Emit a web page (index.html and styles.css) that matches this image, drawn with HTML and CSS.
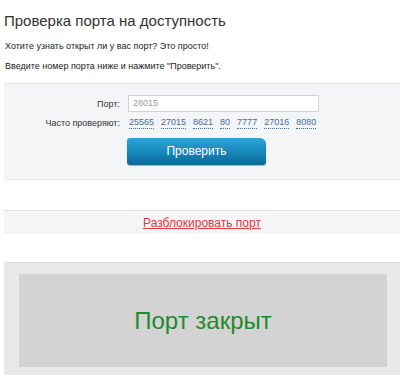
FILE: index.html
```html
<!DOCTYPE html>
<html lang="ru">
<head>
<meta charset="utf-8">
<title>Проверка порта на доступность</title>
<link rel="stylesheet" href="styles.css">
</head>
<body>
<div class="page">
  <h1 class="title">Проверка порта на доступность</h1>
  <p class="intro">Хотите узнать открыт ли у вас порт? Это просто!</p>
  <p class="intro second">Введите номер порта ниже и нажмите "Проверить".</p>

  <div class="check-box">
    <div class="row">
      <span class="label">Порт:</span>
      <div class="port-input">28015</div>
    </div>
    <div class="row row-popular">
      <span class="label">Часто проверяют:</span>
      <div class="popular">
        <a class="num">25565</a>
        <a class="num">27015</a>
        <a class="num">8621</a>
        <a class="num">80</a>
        <a class="num">7777</a>
        <a class="num">27016</a>
        <a class="num">8080</a>
      </div>
    </div>
    <div class="row row-button">
      <span class="label"></span>
      <button class="check-btn">Проверить</button>
    </div>
  </div>

  <div class="unblock">
    <a class="unblock-link">Разблокировать порт</a>
  </div>

  <div class="result-wrap">
    <div class="result">Порт закрыт</div>
  </div>
</div>
</body>
</html>
```

FILE: styles.css
```css
html, body {
  margin: 0;
  padding: 0;
  background: #ffffff;
  overflow: hidden;
}
.page {
  padding-left: 4px;
  font-family: "Liberation Sans", Arial, sans-serif;
  color: #333333;
}
.title {
  margin: 12px 0 0;
  font-size: 15px;
  line-height: 18px;
  font-weight: normal;
  color: #333333;
}
.intro {
  margin: 10px 0 0 1px;
  font-size: 9px;
  line-height: 12px;
  color: #222222;
}
.intro.second {
  margin-top: 8px;
}
.check-box {
  margin-top: 11px;
  background: #f4f5f7;
  border-top: 1px solid #dfe2e6;
  border-bottom: 1px solid #e6e8eb;
  padding: 11px 0 14px;
  display: flex;
  flex-direction: column;
}
.row {
  display: flex;
  align-items: center;
  gap: 8px;
}
.label {
  width: 116px;
  text-align: right;
  font-size: 9px;
  color: #333333;
  flex: none;
}
.port-input {
  box-sizing: border-box;
  width: 191px;
  height: 17px;
  background: #ffffff;
  border: 1px solid #cfd3d8;
  font-size: 9px;
  line-height: 15px;
  padding-left: 4px;
  color: #9a9a9a;
}
.row-popular {
  margin-top: 4px;
  height: 14px;
}
.popular {
  display: flex;
  gap: 7px;
  margin-left: 1px;
}
.num {
  font-size: 9px;
  line-height: 11px;
  color: #426d9a;
  border-bottom: 1px dotted #426d9a;
}
.row-button {
  margin-top: 8px;
  gap: 7px;
}
.check-btn {
  width: 139px;
  height: 27px;
  border: none;
  border-radius: 3px 6px 3px 3px;
  background: linear-gradient(to bottom, #2ea6d4 0%, #1789bb 50%, #0b6796 100%);
  color: #ffffff;
  font-family: "Liberation Sans", Arial, sans-serif;
  font-size: 12px;
  padding: 0 0 1px;
  box-shadow: 0 1px 1px rgba(0, 60, 100, 0.35);
}
.unblock {
  margin-top: 30px;
  height: 21px;
  background: #f4f5f7;
  border-top: 1px solid #dcdfe3;
  border-bottom: 1px solid #eceef0;
  display: flex;
  justify-content: center;
  align-items: center;
}
.unblock-link {
  font-size: 12px;
  line-height: 14px;
  color: #e03a3a;
  text-decoration: underline;
  margin-top: 2px;
}
.result-wrap {
  margin-top: 29px;
  background: #e9e9e9;
  border-top: 1px solid #dedede;
  padding: 11px 0 0 15px;
  height: 113px;
  box-sizing: border-box;
}
.result {
  width: 368px;
  height: 93px;
  background: #d3d3d3;
  display: flex;
  align-items: center;
  justify-content: center;
  font-family: "Liberation Sans", Arial, sans-serif;
  font-size: 24px;
  color: #1f8a2c;
  padding-top: 1px;
  box-sizing: border-box;
}
```
